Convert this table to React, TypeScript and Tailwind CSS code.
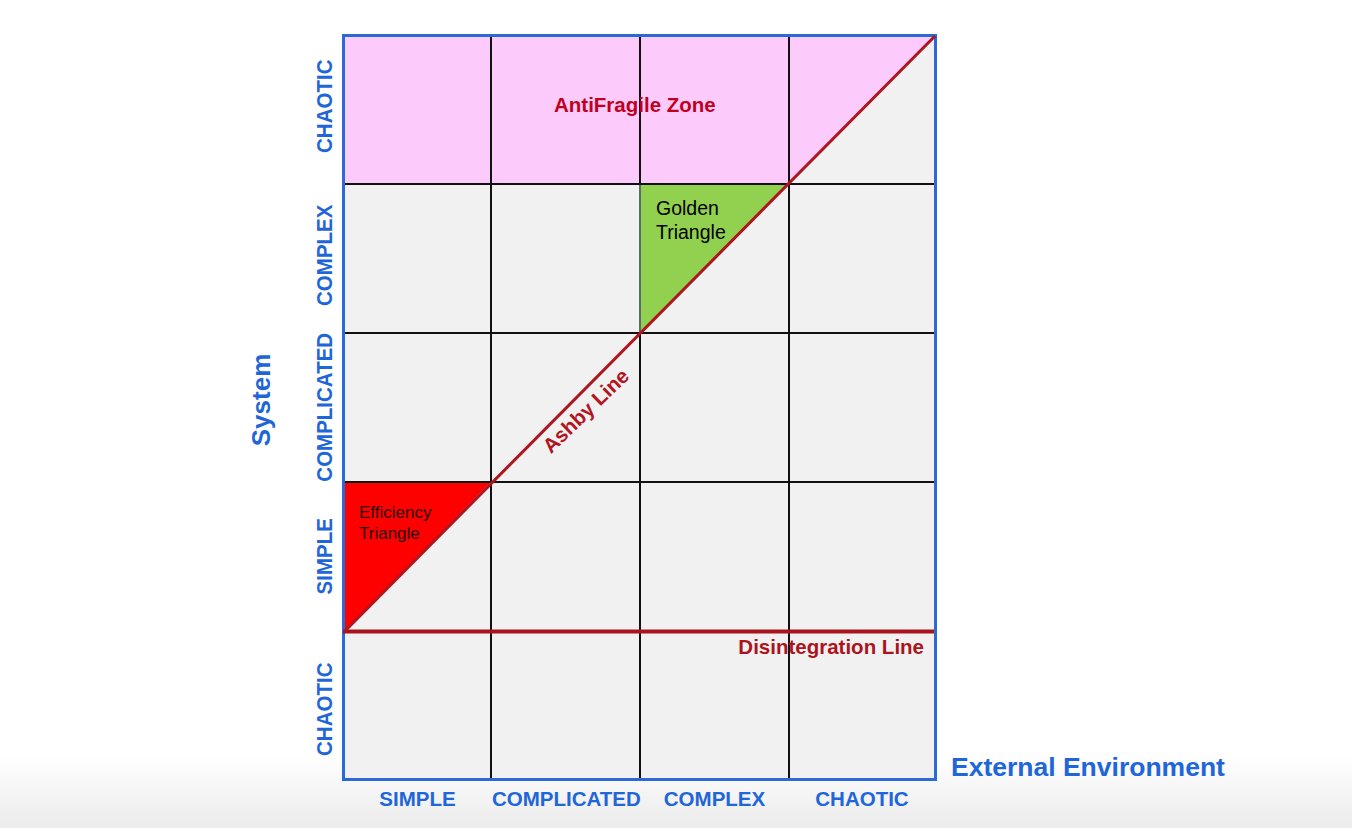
import React from "react";

const yLabels = [
  { text: "CHAOTIC", h: "h-[146px]", cls: "-translate-y-[4px]" },
  { text: "COMPLEX", h: "h-[147px]", cls: "-translate-y-[3px]" },
  { text: "COMPLICATED", h: "h-[147px]", cls: "translate-y-0" },
  { text: "SIMPLE", h: "h-[147px]", cls: "translate-y-0" },
  { text: "CHAOTIC", h: "h-[146px]", cls: "translate-y-[4px]" },
];

const xLabels = ["SIMPLE", "COMPLICATED", "COMPLEX", "CHAOTIC"];

function Tri({ color }: { color: string }) {
  return (
    <svg
      className="absolute inset-0 h-full w-full"
      viewBox="0 0 100 100"
      preserveAspectRatio="none"
    >
      <polygon points="0,0 100,0 0,100" fill={color} />
    </svg>
  );
}

export default function App() {
  const cells: React.ReactNode[] = [];
  for (let r = 0; r < 5; r++) {
    for (let c = 0; c < 4; c++) {
      const key = `${r}-${c}`;
      if (r === 0 && c < 3) {
        cells.push(<div key={key} className="bg-[#fccbfc]" />);
      } else if (r === 0 && c === 3) {
        cells.push(
          <div key={key} className="relative bg-[#f1f1f1]">
            <Tri color="#fccbfc" />
          </div>
        );
      } else if (r === 1 && c === 2) {
        cells.push(
          <div key={key} className="relative bg-[#f1f1f1]">
            <Tri color="#92d050" />
            <div className="relative pl-[15px] pt-[11px] text-[19.5px] leading-[24px] text-black">
              Golden
              <br />
              Triangle
            </div>
          </div>
        );
      } else if (r === 3 && c === 0) {
        cells.push(
          <div key={key} className="relative bg-[#f1f1f1]">
            <Tri color="#ff0000" />
            <div className="relative pl-[14px] pt-[19px] text-[17px] leading-[21px] text-[#2a0606]">
              Efficiency
              <br />
              Triangle
            </div>
          </div>
        );
      } else {
        cells.push(<div key={key} className="bg-[#f1f1f1]" />);
      }
    }
  }

  return (
    <div className="h-[828px] w-[1352px] overflow-hidden bg-[linear-gradient(to_bottom,#ffffff_0px,#ffffff_755px,#ebebeb_828px)] font-['Liberation_Sans',Arial,sans-serif]">
      <div className="flex pl-[248px] pt-[34px]">
        {/* System label */}
        <div className="flex h-[747px] w-[26px] shrink-0 items-center justify-center">
          <div className="-translate-y-[8px] -rotate-90 whitespace-nowrap text-[26px] font-bold leading-none text-[#1f66d8]">
            System
          </div>
        </div>

        {/* Y axis labels */}
        <div className="ml-[33px] flex h-[747px] w-[35px] shrink-0 flex-col gap-[2px] py-[3px]">
          {yLabels.map((l, i) => (
            <div key={i} className={`${l.h} flex w-[35px] items-center justify-center`}>
              <div
                className={`${l.cls} -rotate-90 scale-y-110 whitespace-nowrap text-[20.5px] font-bold leading-none text-[#1f66d8]`}
              >
                {l.text}
              </div>
            </div>
          ))}
        </div>

        {/* Frame + x labels */}
        <div className="flex shrink-0 flex-col">
          <div className="h-[747px] w-[595px] border-[3px] border-[#2a6ad6]">
            <div className="relative grid h-full w-full grid-cols-[145px_147px_147px_144px] grid-rows-[146px_147px_147px_147px_146px] gap-[2px] bg-[#111111]">
              {cells}

              <svg
                className="pointer-events-none absolute inset-0 h-full w-full overflow-visible"
                viewBox="0 0 589 741"
              >
                <line x1="295" y1="148" x2="295" y2="296" stroke="#6f8c86" strokeWidth="1.5" />
                <line x1="-2" y1="594.5" x2="589" y2="594.5" stroke="#a8141c" strokeWidth="4" />
                <line x1="-1" y1="595" x2="590" y2="-1" stroke="#ad161e" strokeWidth="3" />
              </svg>

              <div className="pointer-events-none absolute left-[209px] top-[58px] whitespace-nowrap text-[20.5px] font-bold leading-none text-[#c2001d]">
                AntiFragile Zone
              </div>

              <div className="pointer-events-none absolute left-[241px] top-[374px] -translate-x-1/2 -translate-y-1/2 -rotate-[44deg] whitespace-nowrap text-[20.5px] font-bold leading-none text-[#b3141e]">
                Ashby Line
              </div>

              <div className="pointer-events-none absolute right-[10px] top-[600px] whitespace-nowrap text-[20.5px] font-bold leading-none text-[#ad131d]">
                Disintegration Line
              </div>
            </div>
          </div>

          <div className="mt-[8px] grid grid-cols-[145px_147px_147px_144px] gap-[2px] px-[3px]">
            {xLabels.map((t) => (
              <div
                key={t}
                className="whitespace-nowrap text-center text-[20.5px] font-bold leading-none text-[#1f66d8]"
              >
                {t}
              </div>
            ))}
          </div>
        </div>

        {/* External Environment */}
        <div className="ml-[14px] mt-[720px] self-start whitespace-nowrap text-[26.5px] font-bold leading-none text-[#1f66d8]">
          External Environment
        </div>
      </div>
    </div>
  );
}
